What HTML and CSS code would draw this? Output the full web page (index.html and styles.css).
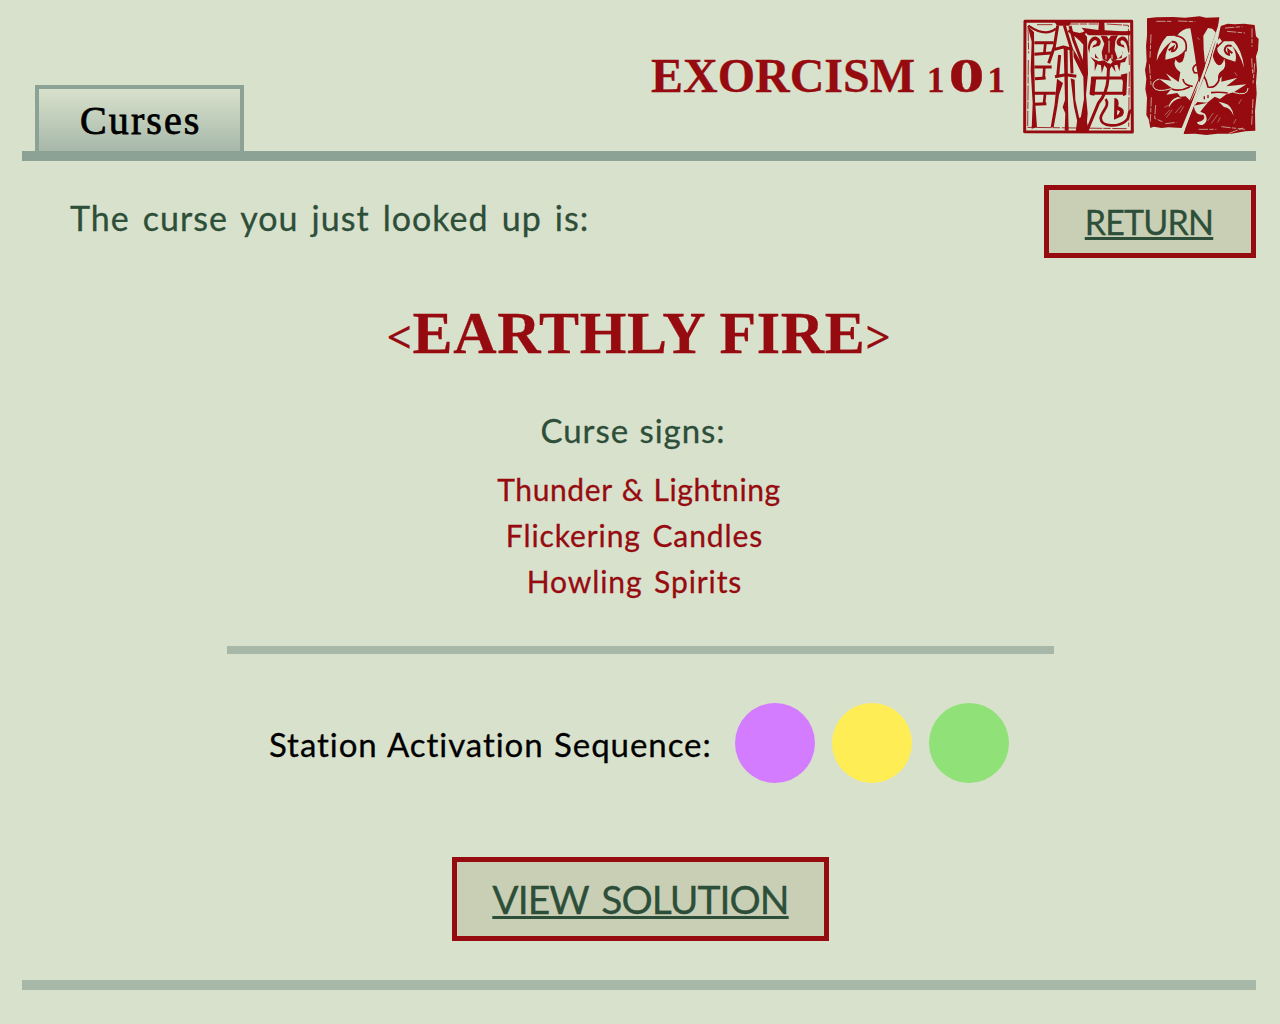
FILE: index.html
```html
<!DOCTYPE html>
<html lang="en">
<head>
<meta charset="utf-8">
<title>Exorcism 101 - Curses</title>
<link rel="stylesheet" href="styles.css">
</head>
<body>
<div class="page">
  <header class="header">
    <div class="tab"><span class="tab-label">Curses</span></div>
    <h1 class="brand">EXORCISM <span class="numeral">1</span><span class="zero">0</span><span class="numeral">1</span></h1>
    <div class="stamps">
      <svg class="stamp" viewBox="0 0 375 390" aria-hidden="true">
        <g fill="none" stroke="#960b10" stroke-linejoin="round">
          <path stroke-width="9" d="M30 34 L350 34 L352 366 L29 365 Z"/>
          <path stroke-width="2.5" d="M39 48 L41 130 M40 150 L38 352 L335 356 M66 44 H112 M145 42 H250 M275 42 L340 46 L343 165 M343 185 L341 350" stroke-dasharray="46 3 22 5"/>
          <path stroke-width="7" d="M40 47 Q90 82 123 56"/>
          <path stroke-width="9" d="M58 98 H116 M58 133 L108 129 M58 171 H110 M60 206 L92 204 M55 250 H122 M60 283 L94 281"/>
          <path stroke-width="8" d="M91 100 L88 131 M88 171 L86 205 M90 252 L87 282"/>
          <path stroke-width="9" d="M128 47 L118 110 L101 160 M119 118 L145 111 L172 118 M120 200 L152 194 L184 199 M134 135 L128 198 M148 46 L171 122"/>
          <path stroke-width="9" d="M168 120 L171 190"/>
          <path stroke-width="9" d="M165 48 L176 90 L205 166"/>
          <path stroke-width="7" d="M160 62 Q196 80 212 66 M216 70 Q285 76 347 66"/>
          <path stroke-width="9" d="M235 200 L228 250 H326 L330 193 M235 204 H332 M281 160 L279 206 Q276 250 250 280 L217 360"/>
          <path stroke-width="8" d="M272 267 C287 288 258 305 257 325 C260 352 310 352 333 332 C348 319 334 308 351 300"/>
        </g>
        <g fill="#960b10">
          <path d="M38 48 L57 66 L58 170 L60 270 L66 352 L50 356 L53 280 L47 180 L50 95 Z"/>
          <path d="M119 36 H168 L163 47 H126 Z"/>
          <path d="M146 114 H158 L159 280 L161 362 H149 L151 310 L143 292 L150 270 Z"/>
          <path d="M126 206 L144 219 L132 255 L127 290 L116 352 H107 L119 282 Z M167 205 L179 209 L181 270 L194 330 L189 344 L177 290 Z"/>
          <path d="M252 35 H268 L269 61 L347 65 L345 76 H222 L212 68 L200 53 L250 60 Z"/>
          <path d="M160 66 L209 72 L216 80 L219 190 L213 255 L218 310 L214 361 L187 366 L198 319 L207 267 L205 200 L176 142 L175 118 L203 166 L205 104 Q190 85 160 66 Z"/>
          <path d="M187 326 L212 316 L222 366 H182 Z"/>
          <path d="M317 194 L337 190 L334 254 L324 259 L324 217 Z M228 200 L244 204 L238 257 L226 255 Z"/>
          <path d="M268 101 L257 77 L276 79 L281 88 L288 77 L309 76 L301 93 L299 120 L308 146 L292 155 L286 143 L278 155 L263 148 L260 127 Z"/>
          <path d="M219 115 C219 89 232 77 244 80 C262 86 261 107 246 109 L231 113 L236 105 L243 103 Q250 90 239 91 C226 97 225 110 223 130 Z"/>
          <path d="M343 118 C343 90 331 76 319 80 C300 87 301 106 316 109 L329 113 L326 105 L319 103 Q312 91 323 91 C336 97 337 112 340 130 Z"/>
          <path d="M226 140 L238 148 L251 154 L268 151 L284 164 L298 151 L318 150 L337 138 L330 156 L317 158 L313 184 L307 164 L298 166 L302 187 L290 169 L282 182 L268 166 L260 190 L258 166 L247 163 L239 184 L239 157 Z"/>
          <path d="M240 122 Q238 134 252 146 L240 143 Z M323 122 Q326 134 308 146 L320 144 Z"/>
          <path d="M298 264 Q314 264 310 289 Q336 298 322 318 L297 329 Z"/>
        </g>
        <path fill="#d8e1cc" d="M307 300 L315 304 Q312 314 306 316 Z"/>
        <path fill="none" stroke="#d8e1cc" stroke-width="3" d="M282 92 V128 M273 134 V148 M291 134 V148"/>
      </svg>
      <svg class="stamp" viewBox="0 0 375 390" aria-hidden="true">
        <g fill="#960b10">
          <path d="M27 25 L55 22 L106 21 L141 23 L185 19 L204 23 L244 22 L238 65 L204 175 L131 354 L91 352 L71 354 L47 350 L37 354 L32 328 L25 315 L27 263 L22 237 L25 207 L21 180 L26 153 L24 107 L27 78 Z"/>
          <path d="M248 48 L269 41 L290 43 L318 41 L350 45 L354 79 L362 87 L360 121 L354 139 L357 181 L354 218 L356 251 L351 303 L352 362 L322 364 L280 371 L238 371 L205 375 L171 371 L137 372 L141 354 L205 196 L239 92 Z"/>
        </g>
        <g fill="#d8e1cc">
          <path d="M117 78 Q134 54 157 55 Q165 97 176 174 L184 220 L158 274 L143 259 L127 260 L118 249 L85 254 L102 235 L64 207 L100 212 L84 190 L122 216 L127 187 Q102 170 113 147 Q121 165 134 154 Q146 125 137 95 Z"/>
          <path d="M210 54 L223 56 L234 68 L222 127 Q227 160 242 166 Q253 165 259 146 Q267 173 251 182 Q237 190 241 213 L251 199 L250 215 L298 203 L265 229 L325 223 L287 247 L265 253 L246 267 L230 260 L208 278 L178 276 L168 289 L202 172 L197 118 L196 77 Z"/>
          <path d="M56 152 C58 120 72 94 87 78 L120 77 Q146 90 141 119 Q128 141 82 149 Q81 122 101 94 Q72 114 56 152 Z"/>
          <path d="M318 173 Q313 122 287 94 H258 L238 114 Q234 140 292 155 Q299 132 282 107 Q305 128 318 173 Z"/>
          <path d="M236 94 L245 84 L252 94 L240 105 Z"/>
          <path d="M167 287 Q172 318 196 314 Q204 325 190 333 L177 337 Q180 347 194 345 Q211 336 204 317 Q203 310 187 305 Q199 289 209 278 Z"/>
          <path d="M92 294 Q93 270 119 261 L131 264 Q104 267 92 294 Z M287 318 Q283 285 257 279 L242 275 L258 291 Q278 293 287 318 Z"/>
        </g>
        <g fill="none" stroke="#960b10">
          <path stroke-width="6" d="M101 95 Q119 94 117 111 Q112 124 102 124 L106 111 L92 121 M281 108 Q263 102 260 119 Q262 132 273 134 L271 120 L283 130"/>
          <path stroke-width="5" d="M112 77 Q153 82 143 125 M176 163 Q158 173 169 188 L179 189 M135 207 Q137 226 164 229 M197 197 Q206 210 210 231 Q233 236 244 208 M101 237 Q125 246 155 231 M219 248 Q244 245 269 249"/>
          <path stroke-width="4" d="M199 259 V268 M210 255 V264"/>
          <path stroke-width="3" d="M154 278 L206 151 L239 56 M166 279 L214 158 L231 94"/>
        </g>
        <g fill="none" stroke="#d8e1cc">
          <path stroke-width="7" d="M246 42 Q222 110 201 180 L136 362"/>
          <path stroke-width="3" d="M100 236 Q53 250 45 229 Q43 213 64 207 M286 247 Q330 260 330 234"/>
          <path stroke-width="2" d="M39 73 L36 143 M34 163 L39 225 M40 262 L37 335 M53 285 L50 325 L73 335 M82 341 L115 337 M55 34 H102 M120 33 L172 35 M261 54 L313 50 M267 64 L321 69 M342 55 V110 M341 145 L344 191 M350 160 L345 220 M345 267 L341 344 M182 358 H235 M250 350 L321 358 M273 370 L315 354" stroke-dasharray="28 4 13 5"/>
          <path stroke-width="1.3" d="M79 292 L96 284 M85 323 L103 299 M80 316 L96 299 M112 309 L131 286 M125 309 L137 289 M209 333 L226 309 M220 340 L239 314 M239 337 L247 322 M302 282 L310 268 M287 341 L294 327 M177 83 L185 89 M290 187 L297 197"/>
        </g>
      </svg>
    </div>
  </header>

  <main class="main">
    <div class="intro-row">
      <p class="intro">The curse you just looked up is:</p>
      <a class="button button-return" href="#">RETURN</a>
    </div>
    <h2 class="curse-name"><span class="angle">&lt;</span>EARTHLY FIRE<span class="angle">&gt;</span></h2>
    <h3 class="signs-title">Curse signs:</h3>
    <ul class="signs">
      <li class="first">Thunder &amp; Lightning</li>
      <li class="shifted">Flickering Candles</li>
      <li class="shifted">Howling Spirits</li>
    </ul>
    <div class="divider"></div>
    <div class="sequence">
      <p class="sequence-label">Station Activation Sequence:</p>
      <span class="dot dot-purple"></span>
      <span class="dot dot-yellow"></span>
      <span class="dot dot-green"></span>
    </div>
    <a class="button button-solution" href="#">VIEW SOLUTION</a>
  </main>
  <div class="footer-bar"></div>
</div>
</body>
</html>
```
FILE: styles.css
```css
* { box-sizing: border-box; }
body {
  margin: 0;
  background: #d8e1cc;
  color: #2d4e38;
  font-family: "Lato", sans-serif;
  font-variant-ligatures: none;
  -webkit-text-stroke: 0.3px currentColor;
}
h1, h2, h3, p, ul { margin: 0; padding: 0; font-weight: 400; }
ul { list-style: none; }

.page {
  width: 1280px;
  height: 1024px;
  padding: 0 24px 0 22px;
  display: flex;
  flex-direction: column;
  overflow: hidden;
}

.header {
  height: 161px;
  border-bottom: 10px solid #8ba294;
  display: flex;
  align-items: flex-start;
}
.tab {
  width: 209px;
  height: 66px;
  margin: 85px 0 0 13px;
  padding-left: 41px;
  border: 4px solid #8ba294;
  border-bottom: 0;
  background: linear-gradient(#d8e1cc, #a7b8a9);
  color: #000;
  font: 400 40px/64px "Liberation Serif", serif;
  letter-spacing: 2.1px;
  -webkit-text-stroke-width: 0.8px;
}
.brand {
  width: 364px;
  margin: 46px 0 0 407px;
  color: #960b10;
  font: 700 48px/60px "Liberation Serif", serif;
  white-space: nowrap;
}
.numeral { font-size: 35px; }
.zero {
  display: inline-block;
  width: 43px;
  text-align: center;
  transform: scaleX(1.5);
}
.stamps { display: flex; margin: 10px -7px 0 auto; }
.stamp { width: 125px; height: 130px; display: block; }
.stamp + .stamp { margin-left: -2px; }

.main { display: flex; flex-direction: column; height: 819px; }
.intro-row {
  display: flex;
  justify-content: space-between;
  padding: 24px 0 0 48px;
  height: 97px;
}
.intro {
  padding-top: 13px;
  font-size: 34px;
  line-height: 40px;
  letter-spacing: 1px;
  word-spacing: 3.4px;
}
.button {
  display: flex;
  justify-content: center;
  align-items: center;
  background: #c8cfb5;
  border: 5px solid #960b10;
  color: #2d4e38;
  text-decoration: underline;
  text-decoration-thickness: 3px;
}
.button-return {
  width: 212px;
  height: 73px;
  padding: 0 2px 1px 0;
  font-size: 34px;
  letter-spacing: -0.8px;
}
.curse-name {
  margin-top: 39px;
  height: 72px;
  text-align: center;
  color: #960b10;
  font: 700 60px/72px "Liberation Serif", serif;
  letter-spacing: 0.65px;
}
.angle { font-size: 44px; position: relative; top: -1px; }
.signs-title {
  margin-top: 40px;
  padding-right: 12px;
  text-align: center;
  font-size: 33px;
  line-height: 42px;
  letter-spacing: 0.95px;
  word-spacing: 1px;
}
.signs {
  margin-top: 15px;
  color: #960b10;
  text-align: center;
  font-size: 30px;
  line-height: 46px;
  letter-spacing: 0.9px;
  word-spacing: 3px;
}
.first { letter-spacing: 0.6px; word-spacing: 1.5px; }
.shifted { padding-right: 9px; }
.divider {
  width: 827px;
  height: 8px;
  margin: 42px 0 0 205px;
  background: #a7b8a9;
}
.sequence {
  display: flex;
  align-items: center;
  gap: 17px;
  height: 80px;
  margin: 49px 0 0 247px;
  color: #000;
}
.sequence-label {
  width: 449px;
  padding-top: 1px;
  font-size: 33px;
  line-height: 40px;
  letter-spacing: 0.95px;
  word-spacing: 1px;
  white-space: nowrap;
}
.dot { width: 80px; height: 80px; border-radius: 50%; }
.dot-purple { background: #d47cff; }
.dot-yellow { background: #ffed56; }
.dot-green { background: #90e177; }
.button-solution {
  width: 377px;
  height: 84px;
  margin: 74px 0 0 430px;
  font-size: 39px;
  letter-spacing: -0.95px;
  word-spacing: 4px;
}
.footer-bar { height: 10px; background: #a7b8a9; }
```
